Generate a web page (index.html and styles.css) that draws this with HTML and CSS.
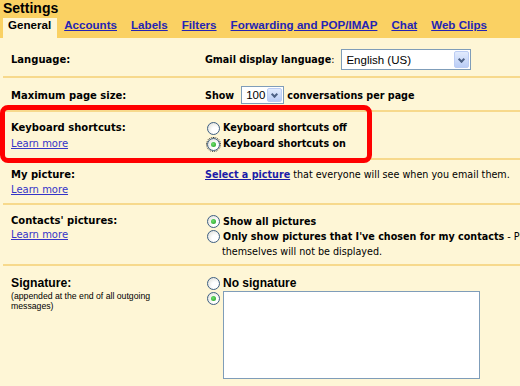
FILE: index.html
```html
<!DOCTYPE html>
<html>
  <head>
    <title>Settings</title>
    <link rel="stylesheet" href="styles.css">
  </head>
  <body>
    <div class="page">
      <div class="header">
        <div class="title">Settings</div>
        <div class="tabs">
          <span class="tab current">General</span>
          <a class="tab" href="#">Accounts</a>
          <a class="tab" href="#">Labels</a>
          <a class="tab" href="#">Filters</a>
          <a class="tab" href="#">Forwarding and POP/IMAP</a>
          <a class="tab" href="#">Chat</a>
          <a class="tab" href="#">Web Clips</a>
        </div>
      </div>

      <div class="content">
        <div class="row row-lang">
          <div class="label"><b>Language:</b></div>
          <div class="value inline">
            <b>Gmail display language</b>:
            <span class="select select-lang">English (US)<span class="arrow"></span></span>
          </div>
        </div>

        <div class="row row-size">
          <div class="label"><b>Maximum page size:</b></div>
          <div class="value inline">
            <b>Show</b>
            <span class="select select-size">100<span class="arrow"></span></span>
            <b>conversations per page</b>
          </div>
        </div>

        <div class="row row-keys">
          <div class="label">
            <b>Keyboard shortcuts:</b><br>
            <a href="#" class="learn">Learn more</a>
          </div>
          <div class="value">
            <div class="opt"><span class="radio"></span><b>Keyboard shortcuts off</b></div>
            <div class="opt"><span class="radio on focus"></span><b>Keyboard shortcuts on</b></div>
          </div>
        </div>

        <div class="row row-pic">
          <div class="label">
            <b>My picture:</b><br>
            <a href="#" class="learn">Learn more</a>
          </div>
          <div class="value nowrap">
            <a href="#" class="strong-link">Select a picture</a> that everyone will see when you email them.
          </div>
        </div>

        <div class="row row-contacts">
          <div class="label">
            <b>Contacts' pictures:</b><br>
            <a href="#" class="learn">Learn more</a>
          </div>
          <div class="value nowrap">
            <div class="opt"><span class="radio on"></span><b>Show all pictures</b></div>
            <div class="opt"><span class="radio"></span><b>Only show pictures that I've chosen for my contacts</b>&nbsp;- Pictures that people have chosen for</div>
            <div class="opt-more">themselves will not be displayed.</div>
          </div>
        </div>

        <div class="row row-sig">
          <div class="label">
            <div class="sig-title">Signature:</div>
            <div class="note">(appended at the end of all outgoing messages)</div>
          </div>
          <div class="value">
            <div class="opt sig-opt"><span class="radio"></span><span class="sig-text">No signature</span></div>
            <div class="sig-box">
              <span class="radio on"></span>
              <textarea class="sig-area"></textarea>
            </div>
          </div>
        </div>
      </div>

      <div class="highlight"></div>
    </div>
  </body>
</html>
```

FILE: styles.css
```css
body {
  margin: 0;
  overflow: hidden;
  background-color: #fef6d6;
  font-family: "DejaVu Sans", Verdana, sans-serif;
  font-size: 10px;
  color: #000;
}
.page {
  position: relative;
  width: 700px;
}
.header {
  background-color: #fad163;
}
.title {
  height: 18px;
  line-height: 19px;
  padding-left: 3px;
  font: bold 14px "Liberation Sans", Arial, sans-serif;
}
.tabs {
  display: flex;
  height: 20px;
  padding-left: 3px;
}
.tab {
  padding: 0 7px;
  line-height: 21px;
  font: bold 11.6px "Liberation Sans", Arial, sans-serif;
  color: #2424b4;
}
.tab.current {
  background-color: #fef6d6;
  color: #000;
  padding: 0 6px 0 5px;
}

.row {
  display: grid;
  grid-template-columns: 194px auto;
  margin-left: 3px;
  padding-left: 8px;
  border-bottom: 2px solid #f7d98c;
}
.value {
  font-size: 9.6px;
}
.row-lang {
  padding-top: 11px;
  padding-bottom: 6px;
  align-items: center;
}
.row-size {
  padding-top: 8px;
  padding-bottom: 6px;
  align-items: center;
}
.row-keys {
  padding-top: 8px;
  padding-bottom: 6px;
  line-height: 16px;
}
.row-pic {
  padding-top: 7px;
  padding-bottom: 6px;
  line-height: 15px;
}
.row-contacts {
  padding-top: 9px;
  padding-bottom: 5px;
  line-height: 15px;
}
.row-contacts .label {
  line-height: 14px;
}
.row-sig {
  padding-top: 9px;
  padding-bottom: 20px;
  border-bottom: none;
}
.inline {
  display: flex;
  align-items: center;
}
.nowrap {
  white-space: nowrap;
}

.learn {
  color: #3535c8;
}
.strong-link {
  color: #1c1ca8;
  font-weight: bold;
}

/* fake XP select boxes */
.select {
  display: inline-flex;
  align-items: center;
  box-sizing: border-box;
  background-color: #fff;
  border: 1px solid #7f9db9;
  font: 11.5px "Liberation Sans", Arial, sans-serif;
  padding: 0 1px 0 4px;
}
.select-lang {
  width: 130px;
  height: 21px;
  margin-left: 7px;
}
.select-size {
  width: 43px;
  height: 18px;
  margin: 0 3px 0 7px;
  padding-left: 4px;
}
.arrow {
  margin-left: auto;
  width: 15px;
  height: calc(100% - 2px);
  box-sizing: border-box;
  border: 1px solid #bccdf4;
  border-radius: 2px;
  background: linear-gradient(#e2ebfd, #bacdf6);
  position: relative;
}
.arrow::after {
  content: "";
  position: absolute;
  left: 4px;
  top: 50%;
  width: 3px;
  height: 3px;
  margin-top: -3px;
  border-right: 2px solid #4d6185;
  border-bottom: 2px solid #4d6185;
  transform: rotate(45deg);
}

/* fake XP radio buttons */
.opt {
  display: flex;
  align-items: center;
}
.radio {
  display: inline-block;
  flex: none;
  width: 11px;
  height: 11px;
  margin: 0 3px 0 2px;
  border: 1px solid #3e5f82;
  border-radius: 50%;
  background: radial-gradient(circle at 65% 65%, #fff 30%, #d8d8d0);
  position: relative;
}
.radio.on::after {
  content: "";
  position: absolute;
  left: 3px;
  top: 3px;
  width: 5px;
  height: 5px;
  border-radius: 50%;
  background: radial-gradient(circle at 40% 40%, #6ee06e, #1e9a1e);
}
.radio.focus {
  outline: 1px dotted #333;
  outline-offset: 0;
}
.opt-more {
  padding-left: 17px;
}

.sig-title {
  font: bold 12.2px "Liberation Sans", Arial, sans-serif;
  line-height: 14px;
  padding-top: 1px;
}
.note {
  width: 140px;
  font: 8.7px "Liberation Sans", Arial, sans-serif;
  line-height: 10px;
  margin-top: 1px;
}
.sig-opt {
  height: 14px;
  padding-top: 1px;
}
.sig-text {
  font: bold 12px "Liberation Sans", Arial, sans-serif;
}
.sig-box {
  display: flex;
  align-items: flex-start;
  margin-top: 1px;
}
.sig-box .radio {
  margin-top: 1px;
}
.sig-area {
  width: 257px;
  height: 88px;
  box-sizing: border-box;
  margin: 0;
  border: 1px solid #7f9db9;
  background-color: #fff;
  resize: none;
}

/* red annotation box drawn over the keyboard row */
.highlight {
  position: absolute;
  left: 0;
  top: 105px;
  width: 372px;
  height: 58px;
  box-sizing: border-box;
  border: 5px solid #ff0000;
  border-radius: 8px;
}
```
